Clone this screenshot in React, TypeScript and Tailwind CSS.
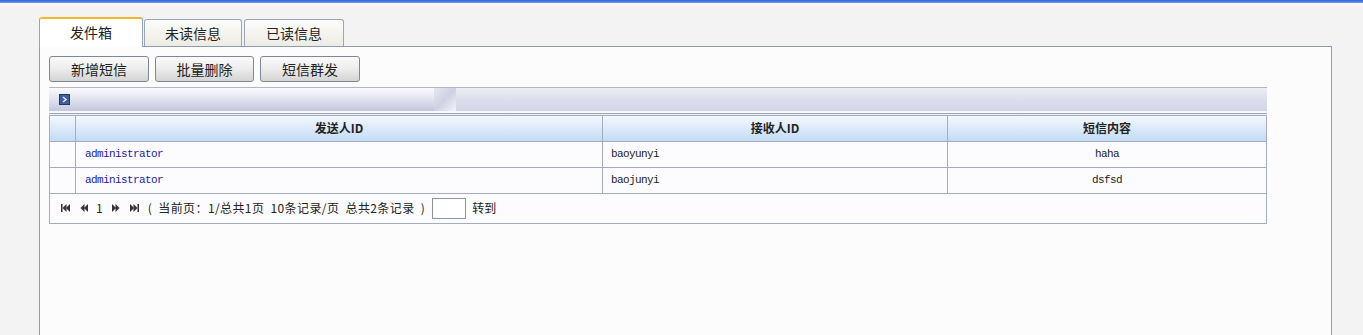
import React from 'react';

const cn = '"Noto Sans CJK SC", "Liberation Sans", sans-serif';
const mono = '"Liberation Mono", "Noto Sans CJK SC", monospace';

const rows = [
    { sender: 'administrator', receiver: 'baoyunyi', content: 'haha' },
    { sender: 'administrator', receiver: 'baojunyi', content: 'dsfsd' },
];

function PageIcon({ type }: { type: 'first' | 'prev' | 'next' | 'last' }) {
    const flip = type === 'next' || type === 'last';
    const bar = type === 'first' || type === 'last';
    return (
        <svg width="10" height="8" viewBox="0 0 10 8" className={flip ? '-scale-x-100' : ''}>
            {bar && <rect x="0" y="0" width="1.5" height="8" fill="#333" />}
            <polygon points="1.5,4 5.5,0 5.5,8" fill="#333" />
            <polygon points="5,4 9,0 9,8" fill="#333" />
        </svg>
    );
}

export default function App() {
    return (
        <div className="w-[1363px] h-[335px] overflow-hidden bg-[#f3f3f3]" style={{ fontFamily: cn }}>
            <div className="h-[3px] bg-gradient-to-b from-[#2f63d8] to-[#6f98ea]" />
            <div className="h-[3px] bg-[#fbf7f5]" />
            <div className="ml-[39px] w-[1293px] pt-[10px]">
                {/* tabs */}
                <div className="flex items-end h-[30px] relative z-10">
                    <div className="w-[104px] h-[30px] border border-[#95a4b8] border-b-0 border-t-2 border-t-[#f3b62f] bg-white rounded-t-[3px] flex items-center justify-center text-[14px] text-[#222] mb-[-1px] pb-[1px]">
                        发件箱
                    </div>
                    <div className="w-[98px] h-[27px] ml-[1px] border border-[#9aa6b6] border-b-0 rounded-t-[3px] bg-gradient-to-b from-[#fdfdfb] to-[#ecebe3] flex items-center justify-center text-[14px] text-[#222]">
                        未读信息
                    </div>
                    <div className="w-[100px] h-[27px] ml-[2px] border border-[#9aa6b6] border-b-0 rounded-t-[3px] bg-gradient-to-b from-[#fdfdfb] to-[#ecebe3] flex items-center justify-center text-[14px] text-[#222]">
                        已读信息
                    </div>
                </div>
                {/* panel */}
                <div className="h-[300px] border border-[#8d9cb3] bg-[#fcfcfd] pl-[9px] pt-[9px]">
                    <div className="flex gap-[6px]">
                        {['新增短信', '批量删除', '短信群发'].map((t, i) => (
                            <div
                                key={t}
                                className={`${i === 1 ? 'w-[99px]' : 'w-[100px]'} h-[26px] border border-[#7c8896] rounded-[3px] bg-gradient-to-b from-[#fbfbfb] via-[#ececec] to-[#d4d4d4] flex items-center justify-center text-[14px] text-[#222]`}
                            >
                                {t}
                            </div>
                        ))}
                    </div>

                    <div className="w-[1218px] mt-[5px]">
                        {/* toolbar */}
                        <div className="h-[24px] border-t border-[#b3b4c8] flex bg-gradient-to-b from-[#eef0f6] to-[#d0d3e6]">
                            <div className="w-[385px] h-full bg-gradient-to-b from-[#fafafe] via-[#e1e2ee] to-[#c4c6dc] flex items-center pl-[10px]">
                                <div className="w-[11px] h-[11px] bg-[#3f5e9e] border border-[#23386a] flex items-center justify-center">
                                    <svg width="7" height="7" viewBox="0 0 7 7">
                                        <polyline points="2,1 5,3.5 2,6" fill="none" stroke="#e8eefc" strokeWidth="1.4" />
                                    </svg>
                                </div>
                            </div>
                            <div className="w-[22px] h-full bg-gradient-to-br from-[#e6e7f1] via-[#cfd1e3] to-[#f3f4f9]" />
                            <div className="flex-1 h-full bg-gradient-to-b from-[#eceef6] via-[#dcdeec] to-[#d2d5e7]" />
                        </div>
                        <div className="h-[2px] bg-[#f6f7fb]" />
                        <div className="h-[1px] bg-[#a3a6ba]" />
                        <div className="h-[1px] bg-[#e8ecf6]" />
                        <div className="h-[1px] bg-[#a8acc0]" />

                        {/* table */}
                        <table className="w-full border-collapse text-[12px] text-[#222]">
                            <thead>
                                <tr className="h-[25px] bg-gradient-to-b from-[#f4f8fe] to-[#c3dbf6]">
                                    <th className="w-[26px] border border-t-0 border-[#a6abbf]"></th>
                                    <th className="w-[527px] border border-t-0 border-[#a6abbf] font-bold">发送人ID</th>
                                    <th className="w-[345px] border border-t-0 border-[#a6abbf] font-bold">接收人ID</th>
                                    <th className="border border-t-0 border-[#a6abbf] font-bold">短信内容</th>
                                </tr>
                            </thead>
                            <tbody>
                                {rows.map((r, i) => (
                                    <tr key={i} className="h-[26px] bg-[#fcfcfe]">
                                        <td className="border border-[#a6abbf]"></td>
                                        <td className="border border-[#a6abbf] pl-[9px] text-[11px] text-[#1a1aa6] tracking-[-0.6px]" style={{ fontFamily: mono }}>
                                            {r.sender}
                                        </td>
                                        <td className="border border-[#a6abbf] pl-[8px] text-[11px] tracking-[-0.6px]" style={{ fontFamily: mono }}>
                                            {r.receiver}
                                        </td>
                                        <td className="border border-[#a6abbf] text-center text-[11px] tracking-[-0.6px]" style={{ fontFamily: mono }}>
                                            {r.content}
                                        </td>
                                    </tr>
                                ))}
                                <tr className="h-[30px] bg-[#fcfcfe]">
                                    <td colSpan={4} className="border border-[#a6abbf] pl-[11px]">
                                        <div className="flex items-center text-[12px] text-[#222]">
                                            <PageIcon type="first" />
                                            <span className="ml-[8px]"><PageIcon type="prev" /></span>
                                            <span className="ml-[7px] leading-none">1</span>
                                            <span className="ml-[8px]"><PageIcon type="next" /></span>
                                            <span className="ml-[8px]"><PageIcon type="last" /></span>
                                            <span className="ml-[9px] whitespace-pre tracking-[0.4px]">(  当前页：1/总共1页  10条记录/页  总共2条记录  )</span>
                                            <div className="ml-[7px] w-[34px] h-[21px] border border-[#8896a8] bg-white" />
                                            <span className="ml-[6px]">转到</span>
                                        </div>
                                    </td>
                                </tr>
                            </tbody>
                        </table>
                    </div>
                </div>
            </div>
        </div>
    );
}
